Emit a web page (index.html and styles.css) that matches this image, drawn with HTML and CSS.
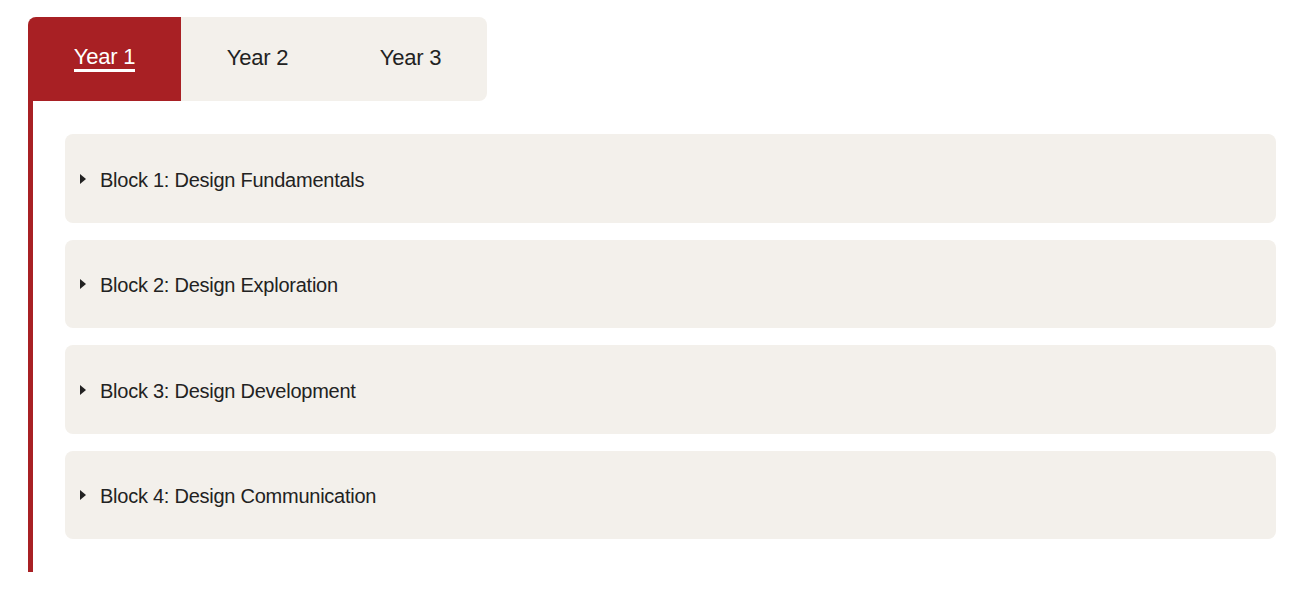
FILE: index.html
```html
<!DOCTYPE html>
<html lang="en">
<head>
<meta charset="utf-8">
<title>Curriculum</title>
<link rel="stylesheet" href="styles.css">
</head>
<body>
<div class="curriculum">
  <div class="tabs">
    <button class="tab active"><span>Year 1</span></button>
    <button class="tab"><span>Year 2</span></button>
    <button class="tab"><span>Year 3</span></button>
  </div>
  <div class="panel">
    <div class="block"><span class="caret"></span><span class="label">Block 1: Design Fundamentals</span></div>
    <div class="block"><span class="caret"></span><span class="label">Block 2: Design Exploration</span></div>
    <div class="block"><span class="caret"></span><span class="label">Block 3: Design Development</span></div>
    <div class="block"><span class="caret"></span><span class="label">Block 4: Design Communication</span></div>
  </div>
</div>
</body>
</html>
```
FILE: styles.css
```css
html, body {
  margin: 0;
  padding: 0;
  background: #ffffff;
  font-family: "Liberation Sans", Arial, sans-serif;
  color: #222222;
}

.curriculum {
  padding: 17px 25px 0 28px;
}

.tabs {
  display: inline-flex;
  background: #f3f0eb;
  border-radius: 8px;
  height: 84px;
}

.tab {
  width: 153px;
  height: 84px;
  border: 0;
  margin: 0;
  padding: 0 0 2px 0;
  background: transparent;
  font-family: inherit;
  font-size: 22px;
  letter-spacing: -0.2px;
  color: #222222;
  display: flex;
  align-items: center;
  justify-content: center;
  cursor: pointer;
}

.tab.active {
  background: #a82024;
  color: #ffffff;
  border-radius: 8px 0 0 0;
}

.tab.active span {
  border-bottom: 3px solid #ffffff;
  line-height: 24px;
}

.panel {
  border-left: 5px solid #a82024;
  padding: 33px 0 33px 32px;
  display: flex;
  flex-direction: column;
  gap: 17px;
}

.block {
  background: #f3f0eb;
  border-radius: 8px;
  height: 88.5px;
  display: flex;
  align-items: center;
  padding: 4px 0 0 15px;
  box-sizing: border-box;
}

.caret {
  width: 0;
  height: 0;
  border-top: 5px solid transparent;
  border-bottom: 5px solid transparent;
  border-left: 6px solid #222222;
  margin: 0 14px 3px 0;
}

.label {
  font-size: 20px;
  letter-spacing: -0.25px;
  color: #222222;
}
```
